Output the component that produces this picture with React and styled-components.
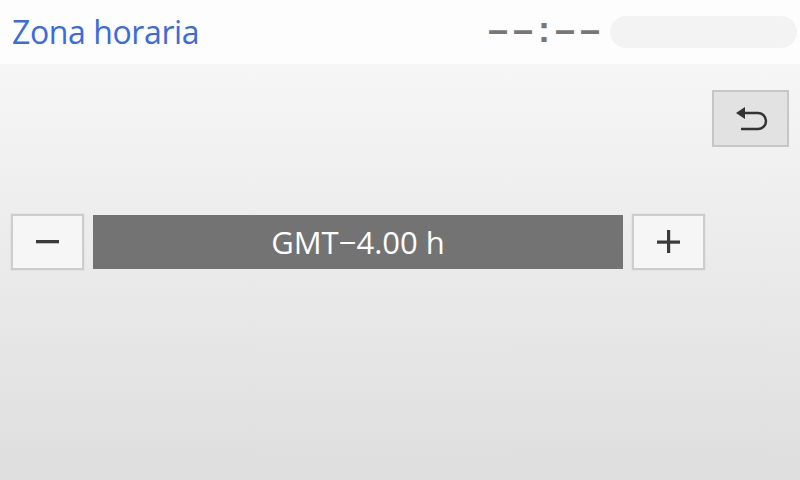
import React from 'react';
import styled, { createGlobalStyle } from 'styled-components';

const Global = createGlobalStyle`
  html, body {
    margin: 0;
    padding: 0;
  }
  body {
    font-family: "Open Sans", "DejaVu Sans", sans-serif;
  }
`;

const Screen = styled.div`
  width: 800px;
  height: 480px;
  display: flex;
  flex-direction: column;
  overflow: hidden;
`;

const Header = styled.div`
  height: 64px;
  background: #fdfdfd;
  display: flex;
  align-items: center;
  padding: 0 3px 0 12px;
  box-sizing: border-box;
`;

const Title = styled.h1`
  margin: 0;
  flex: 1;
  font-size: 32px;
  font-weight: 400;
  color: #3a6be0;
  letter-spacing: -0.4px;
  padding-bottom: 2px;
`;

const Clock = styled.div`
  font-family: "Liberation Sans", sans-serif;
  font-size: 36px;
  font-weight: 700;
  color: #777;
  letter-spacing: 5px;
  margin-right: 5px;
  padding-bottom: 4px;
`;

const Pill = styled.div`
  width: 187px;
  height: 32px;
  border-radius: 16px;
  background: #f3f3f3;
`;

const Body = styled.div`
  flex: 1;
  background: linear-gradient(#f6f6f6, #dedede);
  display: flex;
  flex-direction: column;
  padding: 26px 11px 0 11px;
`;

const TopRow = styled.div`
  display: flex;
  justify-content: flex-end;
`;

const BackButton = styled.button`
  width: 77px;
  height: 57px;
  background: #e2e2e2;
  border: 2px solid #c6c6c6;
  box-sizing: border-box;
  display: flex;
  align-items: center;
  justify-content: center;
  padding: 0;
`;

const StepRow = styled.div`
  margin-top: 67px;
  display: flex;
  align-items: center;
  gap: 9px;
`;

const StepButton = styled.button`
  width: 73px;
  height: 56px;
  background: #f6f6f7;
  border: 2px solid #cdcdcd;
  box-shadow: 0 0 1px #bbb;
  box-sizing: border-box;
  display: flex;
  align-items: center;
  justify-content: center;
  padding: 0;
`;

const Display = styled.div`
  width: 530px;
  height: 54px;
  background: #737373;
  color: #fff;
  font-size: 31px;
  display: flex;
  align-items: center;
  justify-content: center;
  padding-bottom: 1px;
  box-sizing: border-box;
`;

const BackIcon = () => (
  <svg width="36" height="24" viewBox="0 0 36 24">
    <path d="M3 6 L12 0 L12 12 Z" fill="#333" />
    <path d="M11 6 H25 A8 8 0 0 1 25 22 H8" fill="none" stroke="#333" strokeWidth="2.5" />
  </svg>
);

const MinusIcon = () => (
  <svg width="24" height="4" viewBox="0 0 24 4">
    <rect x="0" y="0" width="23" height="3.3" fill="#3a3a3a" />
  </svg>
);

const PlusIcon = () => (
  <svg width="24" height="24" viewBox="0 0 24 24">
    <rect x="0" y="10.5" width="23" height="3.2" fill="#3a3a3a" />
    <rect x="10" y="0" width="3.2" height="23" fill="#3a3a3a" />
  </svg>
);

export default function App() {
  return (
    <Screen>
      <Global />
      <Header>
        <Title>Zona horaria</Title>
        <Clock>––:––</Clock>
        <Pill />
      </Header>
      <Body>
        <TopRow>
          <BackButton>
            <BackIcon />
          </BackButton>
        </TopRow>
        <StepRow>
          <StepButton>
            <MinusIcon />
          </StepButton>
          <Display>GMT−4.00 h</Display>
          <StepButton>
            <PlusIcon />
          </StepButton>
        </StepRow>
      </Body>
    </Screen>
  );
}
